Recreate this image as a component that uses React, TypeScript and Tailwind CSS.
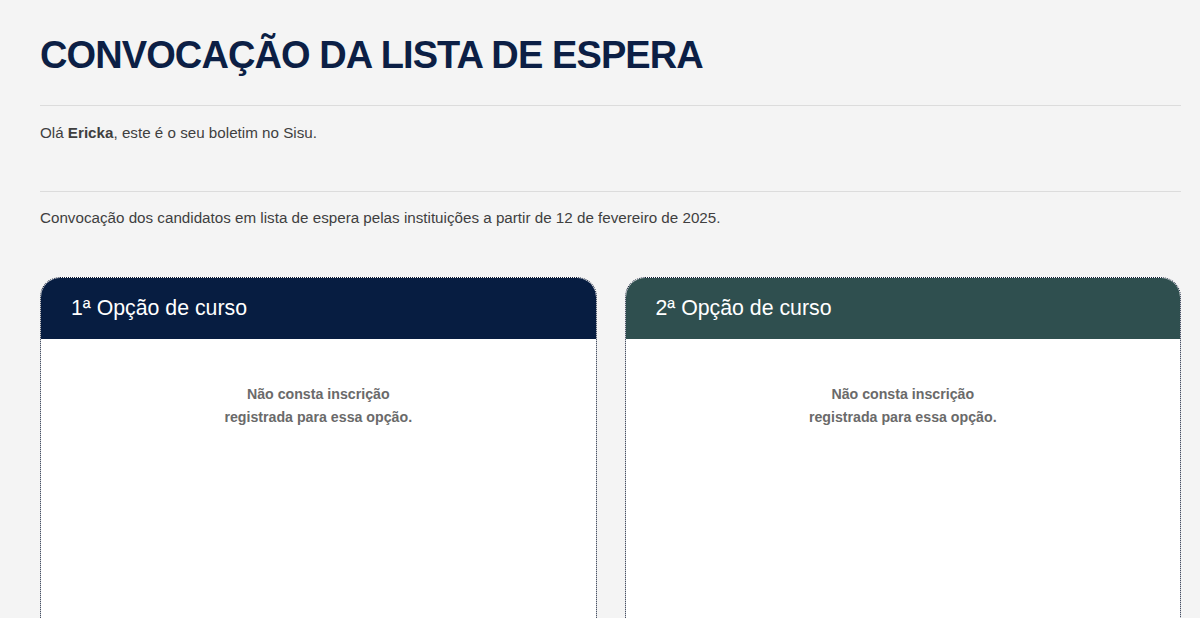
export default function App() {
  const options = [
    { label: "1ª Opção de curso", color: "bg-[#071d41]" },
    { label: "2ª Opção de curso", color: "bg-[#2f4f4f]" },
  ];

  return (
    <div className="min-h-screen bg-[#f4f4f4] font-['Liberation_Sans',Arial,sans-serif] text-[#3f3f3f]">
      <main className="ml-10 w-[1141px] pt-[33px]">
        <h1 className="text-[38px] leading-[44px] font-bold tracking-[-0.9px] text-[#0c1f45]">
          CONVOCAÇÃO DA LISTA DE ESPERA
        </h1>

        <hr className="mt-[28px] border-0 border-t border-[#dcdcdc]" />
        <p className="mt-[17px] text-[15.2px] leading-5">
          Olá <strong>Ericka</strong>, este é o seu boletim no Sisu.
        </p>

        <hr className="mt-[48px] border-0 border-t border-[#dcdcdc]" />
        <p className="mt-[16px] text-[15.2px] leading-5">
          Convocação dos candidatos em lista de espera pelas instituições a partir de 12 de fevereiro de 2025.
        </p>

        <div className="mt-[49px] grid grid-cols-2 gap-7">
          {options.map((opt) => (
            <section
              key={opt.label}
              className="min-h-[420px] rounded-t-[20px] border border-dotted border-[#0e1a33] bg-white overflow-hidden"
            >
              <div className={`${opt.color} h-[61px] flex items-center pl-[30px] text-white text-[21.3px]`}>
                {opt.label}
              </div>
              <div className="pt-[44px] text-center text-[14.2px] leading-[23px] font-bold text-[#6a6a6a]">
                <p>Não consta inscrição</p>
                <p>registrada para essa opção.</p>
              </div>
            </section>
          ))}
        </div>
      </main>
    </div>
  );
}
